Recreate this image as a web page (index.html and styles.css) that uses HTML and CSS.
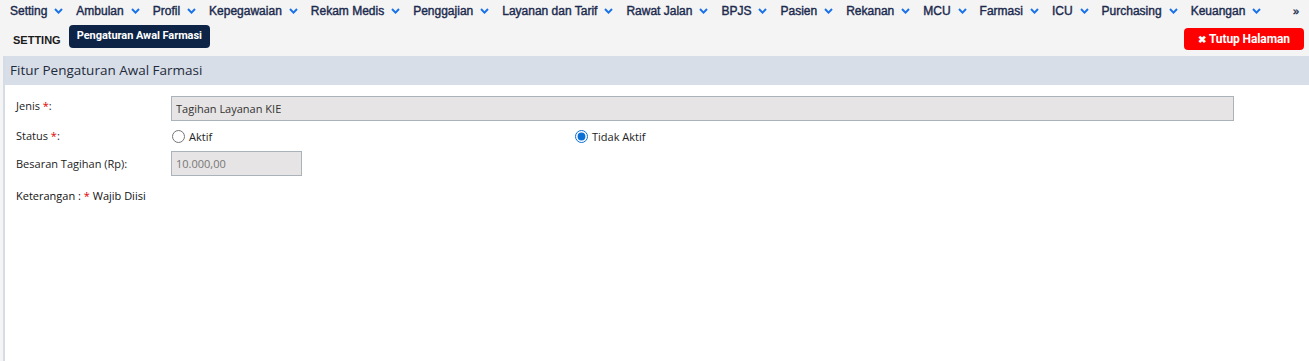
FILE: index.html
```html
<!DOCTYPE html>
<html lang="id">
<head>
  <meta charset="UTF-8">
  <meta name="viewport" content="width=device-width, initial-scale=1.0">
  <title>Pengaturan Awal Farmasi</title>
  <link rel="stylesheet" href="styles.css">
</head>
<body>
  <header class="topbar">
    <nav class="menu">
      <span class="menu-item">Setting <svg class="chev" viewBox="0 0 9 6"><path d="M1 1 L4.5 4.6 L8 1"/></svg></span>
      <span class="menu-item">Ambulan <svg class="chev" viewBox="0 0 9 6"><path d="M1 1 L4.5 4.6 L8 1"/></svg></span>
      <span class="menu-item">Profil <svg class="chev" viewBox="0 0 9 6"><path d="M1 1 L4.5 4.6 L8 1"/></svg></span>
      <span class="menu-item">Kepegawaian <svg class="chev" viewBox="0 0 9 6"><path d="M1 1 L4.5 4.6 L8 1"/></svg></span>
      <span class="menu-item">Rekam Medis <svg class="chev" viewBox="0 0 9 6"><path d="M1 1 L4.5 4.6 L8 1"/></svg></span>
      <span class="menu-item">Penggajian <svg class="chev" viewBox="0 0 9 6"><path d="M1 1 L4.5 4.6 L8 1"/></svg></span>
      <span class="menu-item">Layanan dan Tarif <svg class="chev" viewBox="0 0 9 6"><path d="M1 1 L4.5 4.6 L8 1"/></svg></span>
      <span class="menu-item">Rawat Jalan <svg class="chev" viewBox="0 0 9 6"><path d="M1 1 L4.5 4.6 L8 1"/></svg></span>
      <span class="menu-item">BPJS <svg class="chev" viewBox="0 0 9 6"><path d="M1 1 L4.5 4.6 L8 1"/></svg></span>
      <span class="menu-item">Pasien <svg class="chev" viewBox="0 0 9 6"><path d="M1 1 L4.5 4.6 L8 1"/></svg></span>
      <span class="menu-item">Rekanan <svg class="chev" viewBox="0 0 9 6"><path d="M1 1 L4.5 4.6 L8 1"/></svg></span>
      <span class="menu-item">MCU <svg class="chev" viewBox="0 0 9 6"><path d="M1 1 L4.5 4.6 L8 1"/></svg></span>
      <span class="menu-item">Farmasi <svg class="chev" viewBox="0 0 9 6"><path d="M1 1 L4.5 4.6 L8 1"/></svg></span>
      <span class="menu-item">ICU <svg class="chev" viewBox="0 0 9 6"><path d="M1 1 L4.5 4.6 L8 1"/></svg></span>
      <span class="menu-item">Purchasing <svg class="chev" viewBox="0 0 9 6"><path d="M1 1 L4.5 4.6 L8 1"/></svg></span>
      <span class="menu-item">Keuangan <svg class="chev" viewBox="0 0 9 6"><path d="M1 1 L4.5 4.6 L8 1"/></svg></span>
      <span class="menu-more">&raquo;</span>
    </nav>

    <div class="crumbs">
      <span class="crumb-title">SETTING</span>
      <span class="tab-active">Pengaturan Awal Farmasi</span>
      <button class="btn-close"><span class="x">&#10006;</span>Tutup Halaman</button>
    </div>
  </header>

  <!-- Form panel -->
  <section class="panel">
    <div class="panel-head">Fitur Pengaturan Awal Farmasi</div>
    <div class="panel-body">
      <div class="form-row">
        <label class="form-label">Jenis <span class="req">*</span>:</label>
        <input class="field field-wide" type="text" value="Tagihan Layanan KIE" readonly>
      </div>
      <div class="form-row row-status">
        <label class="form-label">Status <span class="req">*</span>:</label>
        <div class="radio-group">
          <label class="radio"><input type="radio" name="status"> Aktif</label>
          <label class="radio"><input type="radio" name="status" checked> Tidak Aktif</label>
        </div>
      </div>
      <div class="form-row row-center">
        <label class="form-label">Besaran Tagihan (Rp):</label>
        <input class="field field-small" type="text" value="10.000,00" readonly>
      </div>
      <p class="note">Keterangan : <span class="req">*</span> Wajib Diisi</p>
    </div>
  </section>
</body>
</html>
```

FILE: styles.css
```css
/* Page layout */
body {
  margin: 0;
  background: #f4f4f4;
  font-family: "Open Sans", Arial, sans-serif;
  color: #222;
  height: 361px;
  display: flex;
  flex-direction: column;
  overflow: hidden;
}

/* Top menu */
.topbar {
  background: #f4f4f4;
  height: 56px;
}

.menu {
  display: flex;
  align-items: center;
  height: 22px;
  padding-left: 10px;
  font-family: "Liberation Sans", Arial, sans-serif;
  font-size: 12px;
  color: #1b2a4e;
  -webkit-text-stroke: 0.4px #1b2a4e;
  white-space: nowrap;
}

.menu-item {
  display: flex;
  align-items: center;
  margin-right: 13px;
}

.chev {
  width: 9px;
  height: 6px;
  margin-left: 7px;
  fill: none;
  stroke: #1a73e8;
  stroke-width: 2;
}

.menu-more {
  margin-left: auto;
  margin-right: 10px;
  font-size: 11px;
}

.crumbs {
  display: flex;
  align-items: center;
  height: 34px;
  padding: 0 5px 0 13px;
}

.crumb-title {
  font-family: "Liberation Sans", Arial, sans-serif;
  font-weight: bold;
  font-size: 11px;
  color: #1b1b1b;
  margin-top: 1px;
  margin-right: 8px;
}

.tab-active {
  background: #0d2447;
  color: #fff;
  font-family: Roboto, Arial, sans-serif;
  font-weight: bold;
  font-size: 11px;
  letter-spacing: -0.05px;
  padding: 0 8px;
  height: 23px;
  line-height: 21px;
  border-radius: 4px;
  margin-top: -5px;
}

.btn-close {
  margin-left: auto;
  background: #ff0000;
  color: #fff;
  border: none;
  border-radius: 4px;
  height: 22px;
  width: 120px;
  padding: 0;
  font-family: Roboto, Arial, sans-serif;
  font-weight: bold;
  font-size: 12px;
  letter-spacing: -0.1px;
}

.btn-close .x {
  font-size: 10px;
  margin-right: 3px;
}

/* Panel */
.panel {
  flex: 1;
  margin-left: 3px;
  background: #fff;
  border-left: 2px solid #d6dce6;
}

.panel-head {
  background: #d8dee8;
  height: 29px;
  line-height: 29px;
  padding-left: 5px;
  font-size: 13.5px;
  color: #1e2b3a;
}

.panel-body {
  padding: 11px 0 0 11px;
  font-size: 11px;
  color: #222;
}

.form-row {
  display: flex;
  align-items: flex-start;
  margin-bottom: 5px;
}

.row-center {
  align-items: center;
}

.form-label {
  width: 155px;
  flex-shrink: 0;
  padding-top: 2px;
}

.row-center .form-label {
  padding-top: 0;
}

.req {
  color: #e00000;
}

.field {
  box-sizing: border-box;
  height: 25px;
  border: 1px solid #aab2ba;
  background: #e6e4e4;
  font-family: "Open Sans", Arial, sans-serif;
  font-size: 11px;
  padding: 0 4px;
  color: #333;
  outline: none;
}

.field-wide {
  width: 1063px;
}

.field-small {
  width: 131px;
  color: #777;
}

.row-status {
  height: 20px;
  align-items: center;
}

.row-status .form-label {
  padding-top: 0;
  margin-top: -2px;
}

.radio-group {
  display: flex;
}

.radio {
  display: flex;
  align-items: center;
  width: 403px;
}

.radio input {
  margin: 0 4px 0 1px;
  width: 13px;
  height: 13px;
  accent-color: #0b6fd6;
}

.note {
  margin: 12px 0 0;
  font-size: 11px;
  color: #111;
}
```
